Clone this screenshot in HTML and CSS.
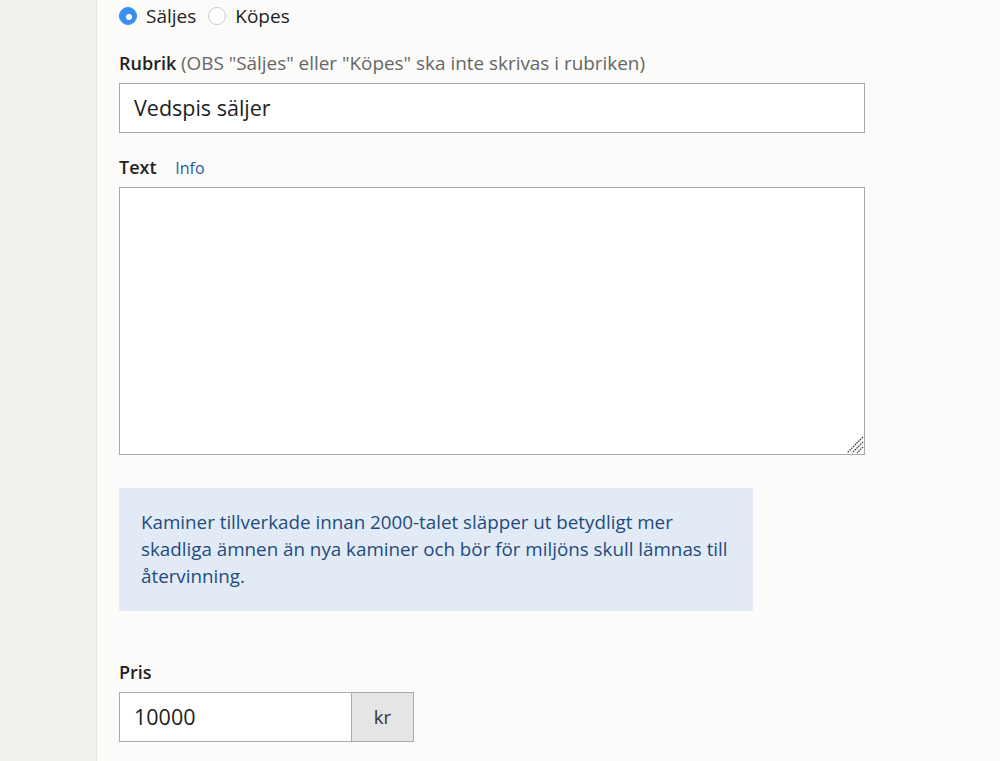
FILE: index.html
```html
<!DOCTYPE html>
<html lang="sv">
<head>
<meta charset="utf-8">
<link rel="stylesheet" href="styles.css">
</head>
<body>
<div class="page">
  <aside class="side"></aside>
  <main class="main">
    <div class="radios">
      <label class="radio"><span class="dot checked"></span>Säljes</label>
      <label class="radio"><span class="dot"></span>Köpes</label>
    </div>
    <div class="field">
      <div class="label"><b>Rubrik</b> <span class="hint">(OBS "Säljes" eller "Köpes" ska inte skrivas i rubriken)</span></div>
      <div class="input wide">Vedspis säljer</div>
    </div>
    <div class="field text-field">
      <div class="label"><b>Text</b> <a class="info">Info</a></div>
      <div class="textarea"><svg class="grip" width="20" height="20" viewBox="0 0 20 20"><path d="M19 3 L3 19 M19 8 L8 19 M19 13 L13 19" stroke="#444" stroke-width="1.3" stroke-dasharray="1.6 0.9"/></svg></div>
    </div>
    <div class="notice">Kaminer tillverkade innan 2000-talet släpper ut betydligt mer skadliga ämnen än nya kaminer och bör för miljöns skull lämnas till återvinning.</div>
    <div class="field price">
      <div class="label"><b>Pris</b></div>
      <div class="group">
        <div class="input short">10000</div>
        <div class="addon">kr</div>
      </div>
    </div>
  </main>
</div>
</body>
</html>
```
FILE: styles.css
```css
html, body { margin: 0; padding: 0; }
body {
  font-family: "Open Sans", "DejaVu Sans", sans-serif;
  color: #222;
  background: #fbfbf9;
  height: 761px;
  overflow: hidden;
}
.page { display: flex; height: 761px; }
.side {
  width: 96px;
  flex: none;
  background: #f1f1ee;
  border-right: 1px solid #e4e4e0;
}
.main {
  flex: 1;
  padding: 4px 0 0 22px;
  background: #fbfbf9;
}
.radios { display: flex; align-items: center; gap: 12px; height: 24px; font-size: 19px; }
.radio { display: flex; align-items: center; gap: 9px; color: #222; }
.dot {
  width: 18px; height: 18px; border-radius: 50%;
  border: 1px solid #c9c9c9;
  background: #fff;
  box-sizing: border-box;
  display: inline-block;
  position: relative;
}
.dot.checked { background: #3a8ef0; border-color: #3a8ef0; }
.dot.checked::after {
  content: ""; position: absolute; left: 6px; top: 6px;
  width: 6px; height: 6px; border-radius: 50%; background: #fff;
}
.field { margin-top: 23px; }
.text-field { margin-top: 22px; }
.label { font-size: 18px; line-height: 24px; margin-bottom: 8px; }
.label b { font-weight: 600; color: #222; }
.hint { color: #666; font-size: 18.9px; }
.info { color: #1f5ca8; font-size: 16px; margin-left: 14px; text-decoration: none; }
.input {
  box-sizing: border-box;
  height: 50px;
  border: 1px solid #aaa;
  background: #fff;
  font-size: 21.5px;
  line-height: 48px;
  padding: 0 14px;
  color: #222;
}
.wide { width: 746px; }
.textarea {
  box-sizing: border-box;
  width: 746px;
  height: 268px;
  border: 1px solid #aaa;
  background: #fff;
  position: relative;
  margin-top: -1px;
}
.grip { position: absolute; right: 0; bottom: 0; }
.notice {
  margin-top: 33px;
  width: 634px;
  box-sizing: border-box;
  background: #e2ebf5;
  color: #1f4a7e;
  font-size: 18.8px;
  line-height: 27px;
  padding: 21px 20px 21px 22px;
  border-radius: 2px;
}
.price { margin-top: 49px; }
.group { display: flex; }
.short { width: 233px; }
.addon {
  box-sizing: border-box;
  width: 62px;
  height: 50px;
  border: 1px solid #aaa;
  border-left: none;
  background: #e5e5e5;
  font-size: 18.5px;
  line-height: 48px;
  text-align: center;
  color: #333;
}
```
